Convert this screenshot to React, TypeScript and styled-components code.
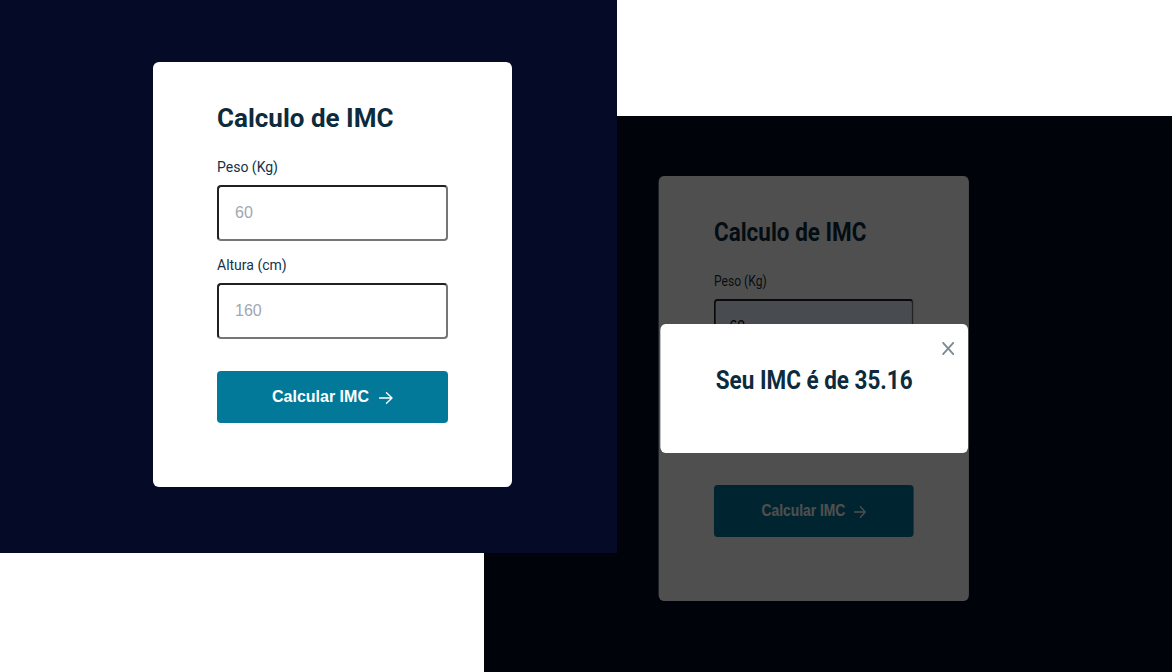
import styled, { createGlobalStyle } from "styled-components"

const GlobalStyle = createGlobalStyle`
    html, body {
        margin: 0;
        padding: 0;
        background: #ffffff;
    }
    * {
        box-sizing: border-box;
    }
`

function ArrowIcon() {
    return (
        <svg width="14" height="12" viewBox="0 0 14 12" fill="none">
            <path d="M0.5 6H13M7.5 0.8L13 6L7.5 11.2" stroke="#ffffff" strokeWidth="1.4" strokeLinecap="round" strokeLinejoin="round" />
        </svg>
    )
}

function CloseIcon() {
    return (
        <svg width="14" height="13" viewBox="0 0 14 13" fill="none">
            <path d="M1 0.8L13 12.2M13 0.8L1 12.2" stroke="#7b8a93" strokeWidth="1.9" strokeLinecap="round" />
        </svg>
    )
}

type FormProps = { filled?: boolean }

function ImcForm({ filled }: FormProps) {
    return (
        <Card>
            <Title>Calculo de IMC</Title>
            <Field>
                <Label>Peso (Kg)</Label>
                <Input filled={filled} placeholder="60" defaultValue={filled ? "60" : undefined} />
            </Field>
            <Field>
                <Label>Altura (cm)</Label>
                <Input filled={filled} placeholder="160" defaultValue={filled ? "160" : undefined} />
            </Field>
            <Button>
                Calcular IMC
                <ArrowIcon />
            </Button>
        </Card>
    )
}

export default function App() {
    return <>
        <GlobalStyle />
        <Stage>
            <FormWindow>
                <ImcForm />
            </FormWindow>

            <ResultWindow>
                <Squeezed>
                    <ImcForm filled />
                    <Overlay />
                    <Modal>
                        <CloseButton><CloseIcon /></CloseButton>
                        <Result>Seu IMC é de 35.16</Result>
                    </Modal>
                </Squeezed>
            </ResultWindow>
        </Stage>
    </>
}

const Stage = styled.div`
    position: relative;
    width: 1172px;
    height: 672px;
    overflow: hidden;
    background: #ffffff;
`

const FormWindow = styled.section`
    position: absolute;
    left: 0;
    top: 0;
    z-index: 2;
    width: 617px;
    height: 553px;
    background: #050a26;
    padding: 62px 0 0 153px;
`

const ResultWindow = styled.section`
    position: absolute;
    left: 484px;
    top: 116px;
    z-index: 1;
    width: 688px;
    height: 556px;
    background: #050a26;
    overflow: hidden;
`

// the second capture is narrower, so its contents are squeezed horizontally
const Squeezed = styled.div`
    position: relative;
    width: 796px;
    height: 556px;
    padding: 60px 0 0 202px;
    transform: scaleX(0.8644);
    transform-origin: left top;
`

const Card = styled.div`
    width: 359px;
    height: 425px;
    background: #ffffff;
    border-radius: 6px;
    padding: 40px 64px 0;
    display: flex;
    flex-direction: column;
`

const Title = styled.h1`
    margin: 0 0 26px;
    font-family: Roboto, "Liberation Sans", sans-serif;
    font-size: 26px;
    line-height: 32px;
    font-weight: 700;
    color: #0c2b3c;
`

const Field = styled.label`
    display: flex;
    flex-direction: column;
    gap: 11px;
    margin-bottom: 17px;
`

const Label = styled.span`
    font-family: Roboto, "Liberation Sans", sans-serif;
    font-size: 14px;
    line-height: 14px;
    color: #143247;
`

const Input = styled.input<{ filled?: boolean }>`
    width: 100%;
    height: 56px;
    border: 2px inset #767676;
    border-radius: 4px;
    padding: 0 16px;
    font-family: "Liberation Sans", Arial, sans-serif;
    font-size: 16px;
    color: #000000;
    background: ${props => props.filled ? "#e8f0fe" : "#ffffff"};
    outline: none;

    &::placeholder {
        color: #a1a7b4;
    }
`

const Button = styled.button`
    margin-top: 15px;
    width: 100%;
    height: 52px;
    border: 0;
    border-radius: 4px;
    background: #03799a;
    color: #ffffff;
    font-family: "Liberation Sans", Arial, sans-serif;
    font-size: 16px;
    font-weight: 700;
    display: flex;
    align-items: center;
    justify-content: center;
    gap: 10px;
    cursor: pointer;

    & > svg {
        margin-top: 1px;
    }
`

const Overlay = styled.div`
    position: absolute;
    inset: 0;
    background: rgba(0, 0, 0, 0.69);
`

const Modal = styled.div`
    position: absolute;
    left: 204px;
    top: 208px;
    width: 356px;
    height: 129px;
    background: #ffffff;
    border-radius: 6px;
    padding-top: 42px;
    text-align: center;
`

const CloseButton = styled.button`
    position: absolute;
    top: 18px;
    right: 16px;
    padding: 0;
    border: 0;
    background: transparent;
    display: flex;
    cursor: pointer;
`

const Result = styled.h2`
    margin: 0;
    font-family: Roboto, "Liberation Sans", sans-serif;
    font-size: 26px;
    line-height: 28px;
    font-weight: 700;
    color: #0c2b3c;
`
